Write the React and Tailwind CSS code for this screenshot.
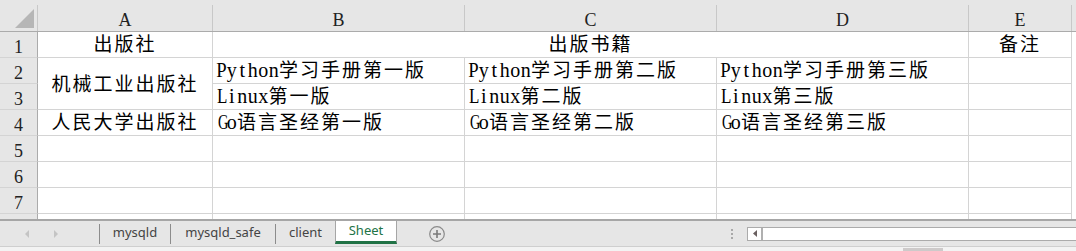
import React from "react";

const CJK = "font-['Noto_Sans_CJK_SC',sans-serif]";

const ADV = { G: 0.722, L: 0.611, P: 0.556 };

function Txt({ s }) {
  const runs = [];
  let cur = null;
  for (const c of s) {
    const latin = /[\x00-\x7f]/.test(c);
    if (!cur || cur.latin !== latin) {
      cur = { latin, text: "" };
      runs.push(cur);
    }
    cur.text += c;
  }
  return (
    <span className="whitespace-nowrap">
      {runs.map((r, i) =>
        r.latin ? (
          [...r.text].map((c, j) => {
            const adv = (ADV[c] || 0.5) * 20;
            const sc = Math.min(1, 10.4 / adv);
            return (
              <span
                key={i + "-" + j}
                className="inline-block w-[10.5px] text-center font-['Liberation_Serif',serif] text-[20px]"
              >
                <span className="inline-block" style={{ transform: `scaleX(${sc})` }}>
                  {c}
                </span>
              </span>
            );
          })
        ) : (
          <span key={i} className={`${CJK} text-[19px] tracking-[2px]`}>
            {r.text}
          </span>
        )
      )}
    </span>
  );
}

const cellBase = "border-r border-b border-[#d4d4d4] bg-white flex items-end pb-[2px] leading-[20px] text-black overflow-visible";

function ColHead({ label, last }) {
  return (
    <div className="bg-[#e6e6e6] border-b border-[#ababab] flex">
      <div className="flex-1 flex items-end justify-center pb-[2px] leading-[18px] font-['Liberation_Serif',serif] text-[18px] text-[#222]">
        {label}
      </div>
      {!last && <div className="w-px mt-[5px] bg-[#c8c8c8]" />}
    </div>
  );
}

function RowHead({ n }) {
  return (
    <div className="bg-[#e6e6e6] border-r border-[#ababab] border-b border-b-[#d4d4d4] flex items-end justify-center pb-[1px] leading-[18px] font-['Liberation_Serif',serif] text-[18px] text-[#222]">
      {n}
    </div>
  );
}

function Cell({ children, center, className = "" }) {
  return (
    <div className={`${cellBase} ${center ? "justify-center" : "pl-[3px]"} ${className}`}>
      {children}
    </div>
  );
}

function Tab({ label, w }) {
  return (
    <div className={`${w} h-full flex items-center justify-center text-[13px] text-[#444] font-['Noto_Sans',sans-serif] pb-[1px]`}>
      {label}
    </div>
  );
}

function Sep() {
  return <div className="w-px h-[20px] bg-[#8c8c8c] self-center" />;
}

export default function App() {
  return (
    <div className="w-[1076px] h-[251px] bg-white overflow-hidden flex flex-col">
      <div className="grid grid-cols-[38px_175px_252px_252px_252px_103px_4px] grid-rows-[32px_26px_26px_26px_26px_26px_26px_26px_5px] h-[219px]">
        {/* header row */}
        <div className="bg-[#e6e6e6] border-b border-[#ababab] flex">
          <div className="flex-1 flex items-end justify-end pr-[3px] pb-[3px]">
            <svg width="19" height="19" viewBox="0 0 19 19">
              <polygon points="0,19 19,19 19,0" fill="#b6b6b6" />
            </svg>
          </div>
          <div className="w-px mt-[5px] bg-[#c8c8c8]" />
        </div>
        <ColHead label="A" />
        <ColHead label="B" />
        <ColHead label="C" />
        <ColHead label="D" />
        <ColHead label="E" />
        <div className="bg-[#e6e6e6] border-b border-[#ababab]" />

        {/* row 1 */}
        <RowHead n="1" />
        <Cell center><Txt s="出版社" /></Cell>
        <Cell center className="col-span-3"><Txt s="出版书籍" /></Cell>
        <Cell center><Txt s="备注" /></Cell>
        <div className="bg-white" />

        {/* row 2 */}
        <RowHead n="2" />
        <div className="row-span-2 border-r border-b border-[#d4d4d4] bg-white flex items-center justify-center leading-[20px] pt-[1px]">
          <Txt s="机械工业出版社" />
        </div>
        <Cell><Txt s="Python学习手册第一版" /></Cell>
        <Cell><Txt s="Python学习手册第二版" /></Cell>
        <Cell><Txt s="Python学习手册第三版" /></Cell>
        <Cell />
        <div className="bg-white" />

        {/* row 3 */}
        <RowHead n="3" />
        <Cell><Txt s="Linux第一版" /></Cell>
        <Cell><Txt s="Linux第二版" /></Cell>
        <Cell><Txt s="Linux第三版" /></Cell>
        <Cell />
        <div className="bg-white" />

        {/* row 4 */}
        <RowHead n="4" />
        <Cell center><Txt s="人民大学出版社" /></Cell>
        <Cell><Txt s="Go语言圣经第一版" /></Cell>
        <Cell><Txt s="Go语言圣经第二版" /></Cell>
        <Cell><Txt s="Go语言圣经第三版" /></Cell>
        <Cell />
        <div className="bg-white" />

        {[5, 6, 7].map((n) => (
          <React.Fragment key={n}>
            <RowHead n={String(n)} />
            <Cell />
            <Cell />
            <Cell />
            <Cell />
            <Cell />
            <div className="bg-white" />
          </React.Fragment>
        ))}

        {/* row 8 partial */}
        <div className="bg-[#e6e6e6] border-r border-[#ababab]" />
        <div className="border-r border-[#d4d4d4]" />
        <div className="border-r border-[#d4d4d4]" />
        <div className="border-r border-[#d4d4d4]" />
        <div className="border-r border-[#d4d4d4]" />
        <div className="border-r border-[#d4d4d4]" />
        <div />
      </div>

      {/* sheet tab bar */}
      <div className="h-[28px] bg-[#e6e6e6] border-t-2 border-[#a6a6a6] border-b border-b-[#cfcfcf] flex items-stretch">
        <div className="w-[99px] flex items-center">
          <svg width="5" height="8" viewBox="0 0 5 8" className="ml-[25px]">
            <polygon points="4,0 4,8 0,4" fill="#c4c4c4" />
          </svg>
          <svg width="5" height="8" viewBox="0 0 5 8" className="ml-[24px]">
            <polygon points="0,0 0,8 4,4" fill="#c4c4c4" />
          </svg>
        </div>
        <Sep />
        <Tab label="mysqld" w="w-[70px]" />
        <Sep />
        <Tab label="mysqld_safe" w="w-[104px]" />
        <Sep />
        <Tab label="client" w="w-[59px]" />
        <div className="w-[62px] bg-white border-x border-[#a6a6a6] border-b-[3px] border-b-[#217346] flex items-center justify-center text-[13px] text-[#217346] font-['Noto_Sans',sans-serif] mb-[2px]">
          Sheet
        </div>
        <div className="w-[334px] flex items-center pl-[32px]">
          <svg width="16" height="16" viewBox="0 0 16 16">
            <circle cx="8" cy="8" r="7.3" fill="none" stroke="#8a8a8a" strokeWidth="1.2" />
            <path d="M8 4v8M4 8h8" stroke="#7a7a7a" strokeWidth="1.6" />
          </svg>
        </div>
        <div className="w-[16px] flex flex-col justify-center gap-[2px]">
          <div className="w-[2px] h-[2px] bg-[#a8a8a8]" />
          <div className="w-[2px] h-[2px] bg-[#a8a8a8]" />
          <div className="w-[2px] h-[2px] bg-[#a8a8a8]" />
        </div>
        <div className="flex-1 flex items-center">
          <div className="flex-1 h-[14px] bg-white border border-[#ababab] border-r-0 flex items-stretch">
            <div className="w-[13px] flex items-center justify-center">
              <svg width="4" height="7" viewBox="0 0 4 7">
                <polygon points="4,0 4,7 0,3.5" fill="#6a6060" />
              </svg>
            </div>
            <div className="w-[2px] bg-[#b0b0b0]" />
            <div className="flex-1" />
          </div>
        </div>
      </div>
      <div className="flex-1 bg-[#f3f3f3] flex items-end">
        <div className="ml-[903px] w-[40px] h-[3px] bg-[#cdcaca]" />
      </div>
    </div>
  );
}
